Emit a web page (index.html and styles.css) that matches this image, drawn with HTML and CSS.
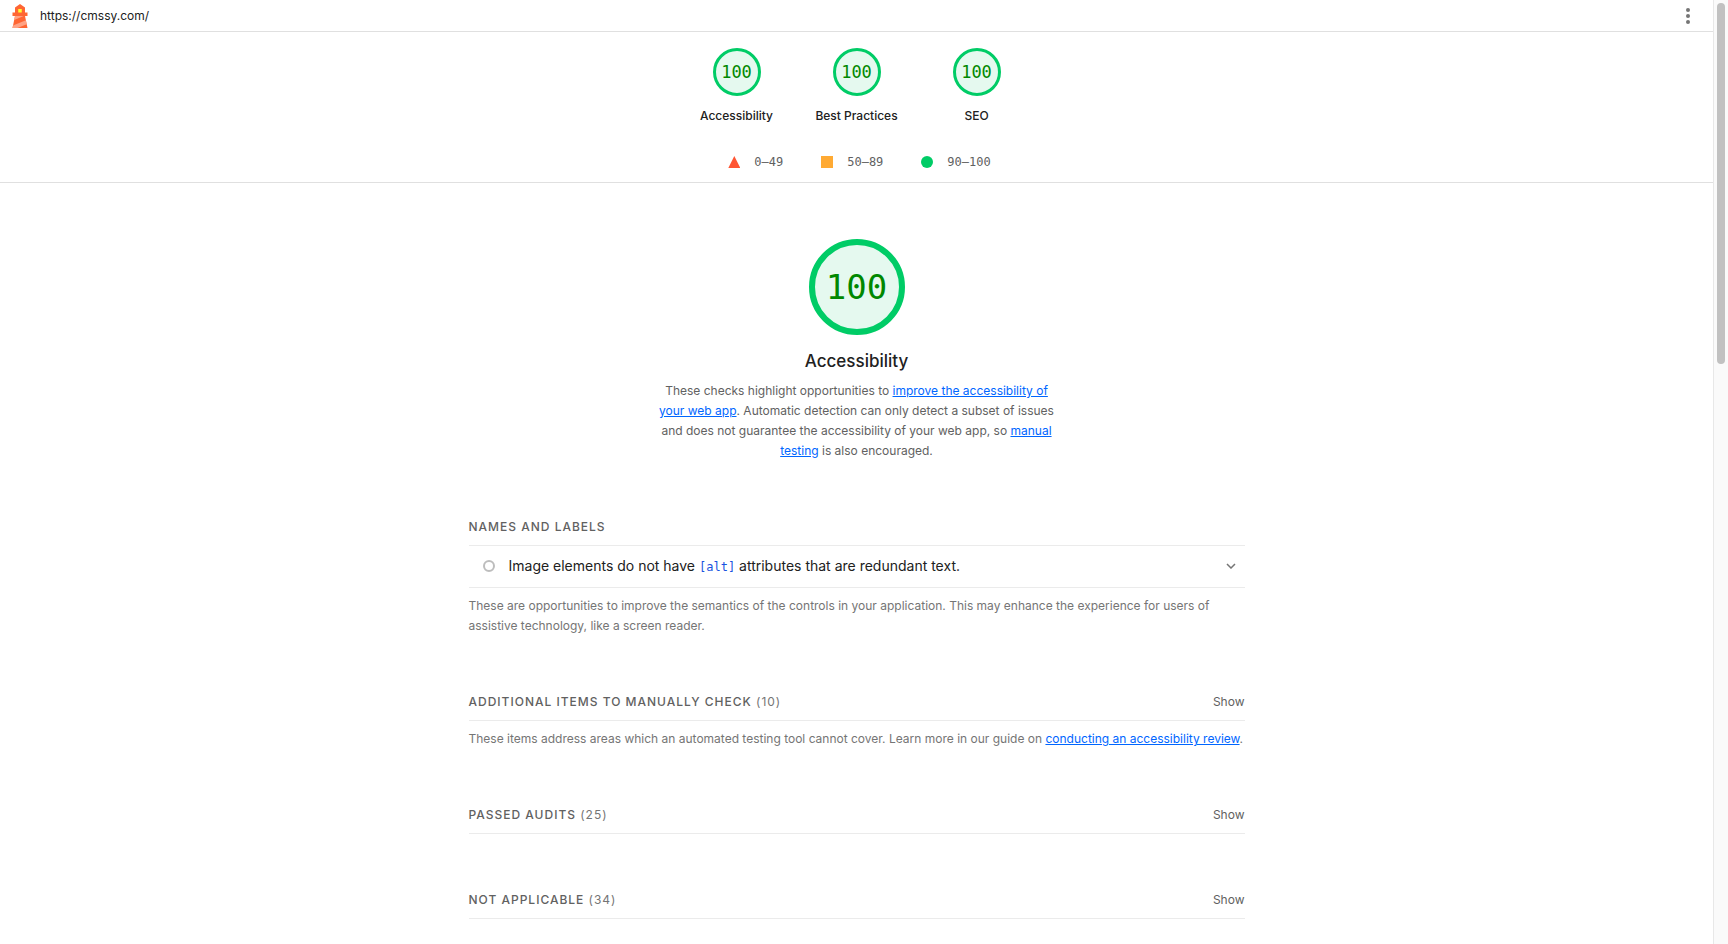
FILE: index.html
```html
<!DOCTYPE html>
<html lang="en">
<head>
  <meta charset="UTF-8">
  <meta name="viewport" content="width=device-width, initial-scale=1.0">
  <title>Lighthouse Report</title>
  <link rel="stylesheet" href="styles.css">
</head>
<body>
  <div class="report">
    <header class="topbar">
      <svg class="topbar-logo" viewBox="0 0 48 48" aria-hidden="true">
        <path d="m14 7 10-7 10 7v10h5v7h-5l5 24H9l5-24H9v-7h5V7Z" fill="#F63"/>
        <path d="M31.561 24H14l-1.689 8.105L31.561 24ZM18.983 48H9l1.022-4.907L35.723 32.27l1.663 7.98L18.983 48Z" fill="#FFA385"/>
        <path fill="#FF3" d="M20.5 10h7v7h-7z"/>
      </svg>
      <a class="topbar-url" href="https://cmssy.com/">https://cmssy.com/</a>
      <button class="tools" aria-label="Toggle Tools Menu">
        <svg viewBox="0 0 24 24" width="24" height="24"><circle cx="12" cy="6" r="2"/><circle cx="12" cy="12" r="2"/><circle cx="12" cy="18" r="2"/></svg>
      </button>
    </header>

    <div class="scores">
      <div class="gauges">
        <a class="gauge" href="#accessibility"><span class="circle">100</span>Accessibility</a>
        <a class="gauge" href="#best-practices"><span class="circle">100</span>Best Practices</a>
        <a class="gauge" href="#seo"><span class="circle">100</span>SEO</a>
      </div>
      <div class="scale">
        <span class="range fail">0–49</span>
        <span class="range average">50–89</span>
        <span class="range pass">90–100</span>
      </div>
    </div>

    <main class="category" id="accessibility">
      <div class="category-header">
        <div class="circle circle-large">100</div>
        <h1>Accessibility</h1>
        <p>These checks highlight opportunities to <a href="#">improve the accessibility of your web app</a>. Automatic detection can only detect a subset of issues and does not guarantee the accessibility of your web app, so <a href="#">manual testing</a> is also encouraged.</p>
      </div>

      <section class="group">
        <h2>Names and labels</h2>
        <details class="audit">
          <summary>
            <span class="audit-icon"></span>
            <span class="audit-title">Image elements do not have <code>[alt]</code> attributes that are redundant text.</span>
            <svg class="chevron" viewBox="0 0 10 6" width="10" height="6"><path d="M1 1l4 4 4-4"/></svg>
          </summary>
        </details>
        <p>These are opportunities to improve the semantics of the controls in your application. This may enhance the experience for users of assistive technology, like a screen reader.</p>
      </section>

      <section class="group">
        <details class="clump">
          <summary><h2>Additional items to manually check <span>(10)</span></h2><span class="show">Show</span></summary>
        </details>
        <p>These items address areas which an automated testing tool cannot cover. Learn more in our guide on <a href="#">conducting an accessibility review</a>.</p>
      </section>

      <section class="group">
        <details class="clump">
          <summary><h2>Passed audits <span>(25)</span></h2><span class="show">Show</span></summary>
        </details>
      </section>

      <section class="group">
        <details class="clump">
          <summary><h2>Not applicable <span>(34)</span></h2><span class="show">Show</span></summary>
        </details>
      </section>
    </main>
  </div>

  <div class="scrollbar"><div class="thumb"></div></div>
</body>
</html>
```

FILE: styles.css
```css
:root {
  --text: #212121;
  --text-secondary: #616161;
  --text-muted: #757575;
  --link: #0066ff;
  --line: #e0e0e0;
  --line-light: #ebebeb;
  --pass: #00cc66;
  --pass-text: #008800;
  --average: #ffaa33;
  --fail: #ff5533;
  --mono: "DejaVu Sans Mono", monospace;
}
* {
  box-sizing: border-box;
}
body {
  margin: 0;
  display: flex;
  font-family: Inter, sans-serif;
  font-size: 12px;
  line-height: 20px;
  color: var(--text);
  background: #fff;
}
h1, h2, p {
  margin: 0;
}
a {
  color: var(--link);
}
.report {
  flex: 1;
  min-width: 0;
}

/* top bar */
.topbar {
  display: flex;
  align-items: center;
  height: 32px;
  padding: 0 13px 0 8px;
  border-bottom: 1px solid var(--line);
}
.topbar-logo {
  width: 24px;
  height: 24px;
  margin-right: 8px;
}
.topbar-url {
  flex: 1;
  color: var(--text);
  text-decoration: none;
}
.tools {
  display: flex;
  padding: 0;
  border: none;
  background: none;
  fill: var(--text-muted);
  cursor: pointer;
}

/* scores */
.scores {
  padding: 16px 0 10px;
  border-bottom: 1px solid var(--line);
}
.gauges {
  display: flex;
  justify-content: center;
}
.gauge {
  display: flex;
  flex-direction: column;
  align-items: center;
  gap: 10px;
  width: 120px;
  font-weight: 500;
  color: var(--text);
  text-decoration: none;
}
.circle {
  display: flex;
  align-items: center;
  justify-content: center;
  width: 48px;
  height: 48px;
  border: 3px solid var(--pass);
  border-radius: 50%;
  background: #e5f9ef;
  color: var(--pass-text);
  font-family: var(--mono);
  font-size: 17px;
  font-weight: 400;
}
.circle-large {
  width: 96px;
  height: 96px;
  border-width: 6px;
  font-size: 34px;
}
.scale {
  display: flex;
  justify-content: center;
  gap: 38px;
  margin-top: 26px;
  padding-left: 6px;
  font-family: var(--mono);
  color: var(--text-secondary);
}
.range {
  display: flex;
  align-items: center;
  gap: 14px;
}
.range::before {
  content: "";
  width: 12px;
  height: 12px;
}
.fail::before {
  background: var(--fail);
  clip-path: polygon(50% 0, 100% 100%, 0 100%);
}
.average::before {
  background: var(--average);
}
.pass::before {
  background: var(--pass);
  border-radius: 50%;
}

/* category */
.category {
  max-width: 776px;
  margin: 0 auto;
  padding: 56px 0 24px;
}
.category-header {
  display: flex;
  flex-direction: column;
  align-items: center;
  text-align: center;
}
.category-header h1 {
  margin: 14px 0 8px;
  font-size: 17px;
  line-height: 24px;
  font-weight: 500;
}
.category-header p {
  max-width: 400px;
  color: var(--text-secondary);
}
.group {
  margin-top: 56px;
}
.group h2 {
  font-size: 12px;
  font-weight: 500;
  letter-spacing: 1px;
  text-transform: uppercase;
  color: var(--text-secondary);
}
.group h2 span {
  font-weight: 400;
  color: var(--text-muted);
}
.group p {
  margin-top: 8px;
  color: var(--text-muted);
}
summary {
  display: flex;
  align-items: center;
  list-style: none;
  cursor: pointer;
}
.clump summary {
  justify-content: space-between;
  padding-bottom: 8px;
  border-bottom: 1px solid var(--line-light);
}
.show {
  color: var(--text-secondary);
}
.audit {
  margin-top: 8px;
  border: solid var(--line-light);
  border-width: 1px 0;
}
.audit summary {
  padding: 10px 9px 11px 14px;
  font-size: 14px;
}
.audit-icon {
  width: 12px;
  height: 12px;
  margin-right: 14px;
  border: 2px solid #bdbdbd;
  border-radius: 50%;
}
.audit-title {
  flex: 1;
}
.audit code {
  font-family: var(--mono);
  font-size: 12px;
  line-height: 1;
  color: #1a53e0;
}
.chevron {
  fill: none;
  stroke: var(--text-muted);
  stroke-width: 1.5;
}

/* scroll track */
.scrollbar {
  position: sticky;
  top: 0;
  width: 15px;
  height: 100vh;
  padding: 3px 3px 0;
  border-left: 1px solid #e8e8e8;
  background: #fafafa;
}
.thumb {
  width: 8px;
  height: 361px;
  border-radius: 4px;
  background: #c1c1c1;
}
```
